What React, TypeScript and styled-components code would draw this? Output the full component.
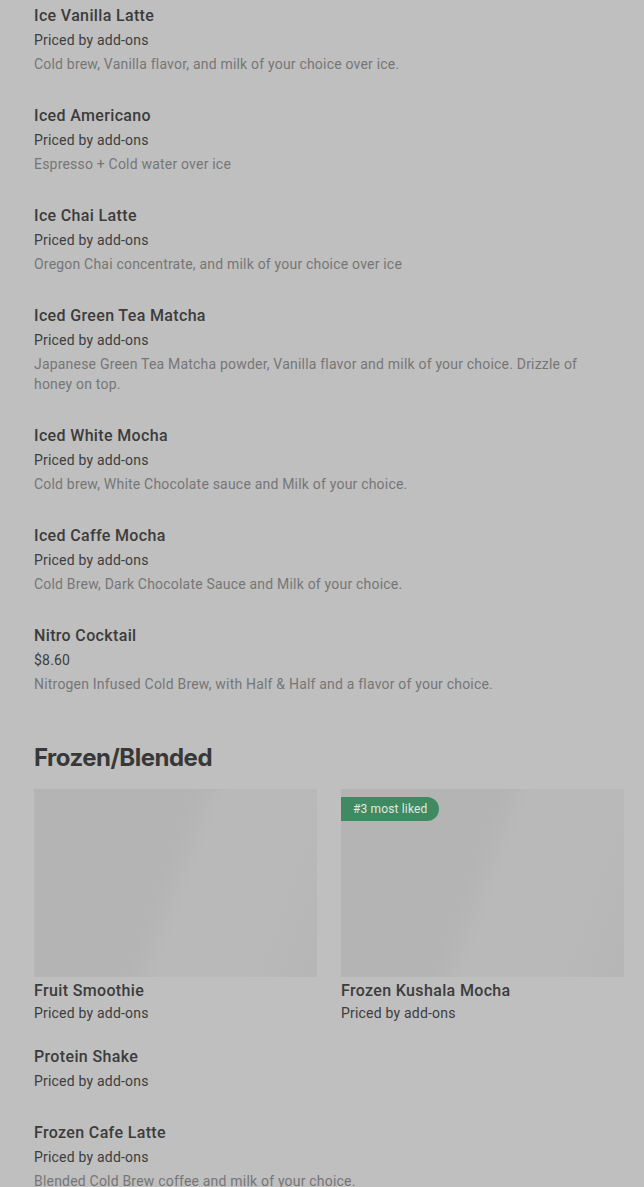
import React from "react";
import styled, { createGlobalStyle } from "styled-components";

const Global = createGlobalStyle`
  html, body { margin: 0; padding: 0; background: #bfbfbf; }
  body { font-family: Roboto, "Liberation Sans", sans-serif; -webkit-font-smoothing: antialiased; }
`;

const Page = styled.div`
  padding: 4px 34px 0 34px;
  background: #bfbfbf;
  min-height: 1187px;
  overflow: hidden;
`;

const List = styled.div`
  display: flex;
  flex-direction: column;
  gap: 30px;
`;

const Item = styled.div`
  display: flex;
  flex-direction: column;
`;

const Title = styled.div`
  font-size: 16px;
  line-height: 24px;
  font-weight: 500;
  letter-spacing: 0.35px;
  color: #3c3c3c;
`;

const Price = styled.div`
  font-size: 14px;
  line-height: 20px;
  letter-spacing: 0.2px;
  color: #3d3d3d;
  margin-top: 2px;
`;

const Desc = styled.div`
  font-size: 14px;
  line-height: 20px;
  letter-spacing: 0.2px;
  color: #767676;
  margin-top: 4px;
  max-width: 576px;
`;

const Heading = styled.h2`
  margin: 48px 0 15px;
  font-family: Inter, Roboto, sans-serif;
  font-size: 24px;
  line-height: 32px;
  font-weight: 700;
  letter-spacing: -0.5px;
  color: #383838;
`;

const Carousel = styled.div`
  display: flex;
  gap: 24px;
  width: 610px;
`;

const Card = styled.div`
  flex: 0 0 283px;
  display: flex;
  flex-direction: column;
`;

const Thumb = styled.div`
  position: relative;
  height: 188px;
  background: linear-gradient(
    110deg,
    #b4b4b4 0%,
    #b4b4b4 45%,
    #b9b9b9 55%,
    #b9b9b9 80%,
    #b6b6b6 100%
  );
`;

const Badge = styled.span`
  position: absolute;
  top: 8px;
  left: 0;
  height: 24px;
  padding: 0 12px;
  display: inline-flex;
  align-items: center;
  background: #3f8a60;
  color: #e0e8e3;
  font-size: 12px;
  letter-spacing: 0.15px;
  border-radius: 0 12px 12px 0;
`;

const CardTitle = styled(Title)`
  margin-top: 2px;
`;

const CardPrice = styled(Price)`
  margin-top: 0;
`;

const Lower = styled(List)`
  margin-top: 22px;
`;

type Entry = { t: string; p: string; d?: string };

const drinks: Entry[] = [
  { t: "Ice Vanilla Latte", p: "Priced by add-ons", d: "Cold brew, Vanilla flavor, and milk of your choice over ice." },
  { t: "Iced Americano", p: "Priced by add-ons", d: "Espresso + Cold water over ice" },
  { t: "Ice Chai Latte", p: "Priced by add-ons", d: "Oregon Chai concentrate, and milk of your choice over ice" },
  { t: "Iced Green Tea Matcha", p: "Priced by add-ons", d: "Japanese Green Tea Matcha powder, Vanilla flavor and milk of your choice. Drizzle of honey on top." },
  { t: "Iced White Mocha", p: "Priced by add-ons", d: "Cold brew, White Chocolate sauce and Milk of your choice." },
  { t: "Iced Caffe Mocha", p: "Priced by add-ons", d: "Cold Brew, Dark Chocolate Sauce and Milk of your choice." },
  { t: "Nitro Cocktail", p: "$8.60", d: "Nitrogen Infused Cold Brew, with Half & Half and a flavor of your choice." },
];

const frozenCards = [
  { t: "Fruit Smoothie", p: "Priced by add-ons" },
  { t: "Frozen Kushala Mocha", p: "Priced by add-ons", badge: "#3 most liked" },
];

const frozen: Entry[] = [
  { t: "Protein Shake", p: "Priced by add-ons" },
  { t: "Frozen Cafe Latte", p: "Priced by add-ons", d: "Blended Cold Brew coffee and milk of your choice." },
];

function Row({ e }: { e: Entry }) {
  return (
    <Item>
      <Title>{e.t}</Title>
      <Price>{e.p}</Price>
      {e.d && <Desc>{e.d}</Desc>}
    </Item>
  );
}

export default function App() {
  return (
    <>
      <Global />
      <Page>
        <List>
          {drinks.map((e) => (
            <Row key={e.t} e={e} />
          ))}
        </List>
        <Heading>Frozen/Blended</Heading>
        <Carousel>
          {frozenCards.map((c) => (
            <Card key={c.t}>
              <Thumb>{c.badge && <Badge>{c.badge}</Badge>}</Thumb>
              <CardTitle>{c.t}</CardTitle>
              <CardPrice>{c.p}</CardPrice>
            </Card>
          ))}
        </Carousel>
        <Lower>
          {frozen.map((e) => (
            <Row key={e.t} e={e} />
          ))}
        </Lower>
      </Page>
    </>
  );
}
